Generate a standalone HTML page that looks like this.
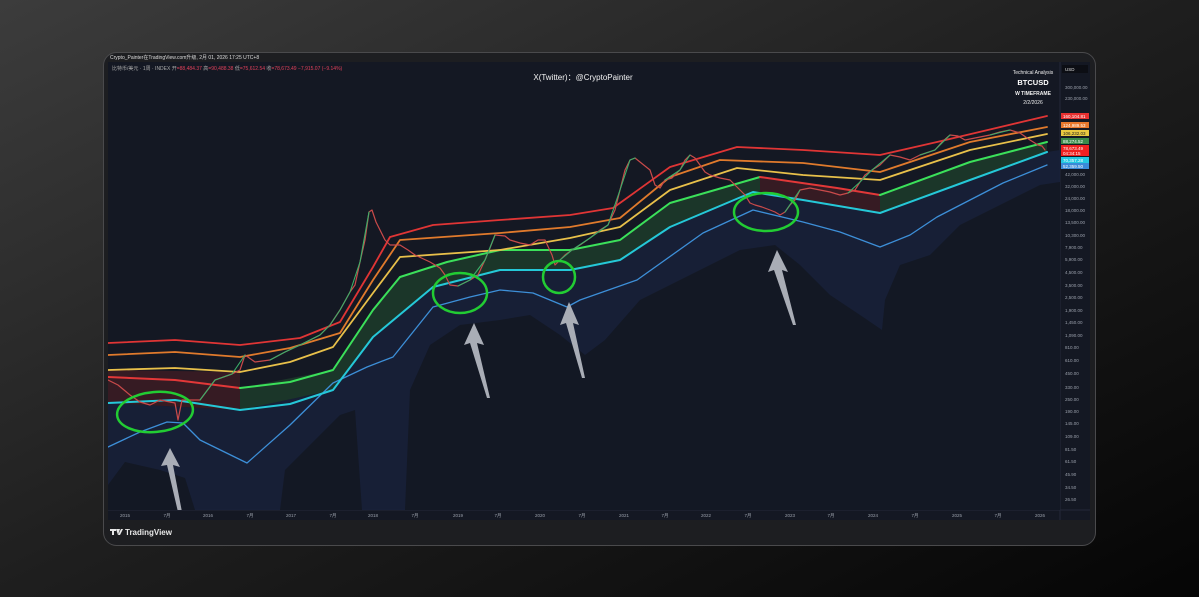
<!DOCTYPE html>
<html><head><meta charset="utf-8"><style>
html,body{margin:0;padding:0;width:1199px;height:597px;overflow:hidden;background:#111;}
svg{display:block}
text{font-family:"Liberation Sans","Noto Sans CJK SC",sans-serif;}
</style></head><body>
<svg width="1199" height="597" viewBox="0 0 1199 597" xmlns="http://www.w3.org/2000/svg">
<defs>
<linearGradient id="bg" x1="0" y1="0" x2="1" y2="1">
<stop offset="0" stop-color="#3c3c3c"/><stop offset="0.5" stop-color="#1e1e1e"/><stop offset="1" stop-color="#050505"/>
</linearGradient>
<clipPath id="cc"><rect x="108" y="62" width="952" height="448"/></clipPath>
</defs>
<rect width="1199" height="597" fill="url(#bg)"/>
<rect x="103.5" y="52.5" width="992" height="493" rx="13" fill="#1d1e21" stroke="#4a4a4c" stroke-width="1"/>
<rect x="108" y="62" width="982" height="458" fill="#141823"/>
<line x1="108" y1="510" x2="1090" y2="510" stroke="#232838"/>
<line x1="1060" y1="62" x2="1060" y2="520" stroke="#232838"/>
<text x="110" y="59" font-size="5" fill="#ddd">Crypto_Painter在TradingView.com升级, 2月 01, 2026 17:25 UTC+8</text>
<text x="112" y="70" font-size="5" fill="#aaa">比特币/美元 · 1周 · INDEX  开<tspan fill="#e0405a">=88,484.37</tspan> 高<tspan fill="#e0405a">=90,488.38</tspan> 低<tspan fill="#e0405a">=75,612.54</tspan> 收<tspan fill="#e0405a">=78,673.49  −7,915.07 (−9.14%)</tspan></text>
<g clip-path="url(#cc)">
<polygon fill="#17213a" opacity="0.85" points="108,403 240,410 333,390 373,337 433,287 500,270 570,270 620,260 670,227 753,192 803,200 880,213 970,180 1047,152 1060,150 1060,510 108,510"/>
<polygon fill="#131824" points="108,510 108,485 125,462 160,470 185,478 195,510"/>
<polygon fill="#131824" points="280,510 285,470 310,445 340,415 355,410 362,510"/>
<polygon fill="#131824" points="405,510 410,390 430,345 460,325 500,320 530,315 560,335 585,355 605,340 640,300 690,275 740,250 775,245 800,265 830,295 860,315 882,330 885,300 900,265 930,255 960,225 1000,205 1040,185 1060,182 1060,510"/>
<polygon fill="#3a1c24" opacity="0.9" points="108,370 240,372 240,410 108,403"/>
<polygon fill="#1c3a2a" opacity="0.9" points="240,388 333,370 373,310 400,277 447,262 500,250 570,250 620,240 670,203 760,177 760,192 753,192 670,227 620,260 570,270 500,270 433,287 373,337 333,390 240,410"/>
<polygon fill="#3a1c24" opacity="0.9" points="760,177 837,188 880,195 880,213 803,200 760,192"/>
<polygon fill="#1c3a2a" opacity="0.9" points="880,195 970,162 1047,142 1047,152 970,180 880,213"/>
<g fill="none" stroke-linejoin="round" stroke-linecap="round">
<polyline stroke="#3d8fd8" stroke-width="1.3" points="108,447 140,432 167,422 183,423 200,440 247,463 290,425 333,383 367,367 393,357 433,307 470,297 500,290 533,293 567,307 580,300 637,280 703,233 753,210 803,222 840,232 880,247 910,235 937,217 1003,183 1047,165"/>
<polyline stroke="#25c8d8" stroke-width="2" points="108,403 175,400 240,410 290,404 333,390 373,337 433,287 500,270 570,270 620,260 670,227 753,192 803,200 880,213 970,180 1047,152"/>
<polyline stroke="#e23838" stroke-width="2" points="108,377 175,380 240,388"/>
<polyline stroke="#3be05a" stroke-width="2" points="240,388 290,382 333,370 373,310 400,277 447,262 500,250 570,250 620,240 670,203 760,177"/>
<polyline stroke="#e23838" stroke-width="2" points="760,177 837,188 880,195"/>
<polyline stroke="#3be05a" stroke-width="2" points="880,195 970,162 1047,142"/>
<polyline stroke="#e8c04a" stroke-width="1.8" points="108,370 175,368 240,372 290,362 333,347 373,293 400,257 500,250 570,238 620,227 670,190 737,168 803,175 880,180 970,150 1047,134"/>
<polyline stroke="#e07a2c" stroke-width="1.8" points="108,355 175,352 240,357 290,348 340,333 373,280 400,240 500,233 570,227 620,218 670,177 720,160 803,163 880,172 970,142 1047,127"/>
<polyline stroke="#e03535" stroke-width="1.8" points="108,343 175,340 240,345 300,338 340,322 373,267 390,237 433,225 500,220 570,215 613,208 670,167 737,147 803,150 880,155 937,142 1047,116"/>
<polyline stroke="#c94a4a" stroke-width="1.2" points="108,380 118,385 130,395 140,402 150,405 160,400 175,403 178,420 182,400 200,400 215,380 232,374 240,370 245,355 255,362 270,360 285,352 300,345 320,335 330,325 340,310 350,292 355,285 360,262 365,240 369,212 372,210 376,222 380,230 385,240 390,245 400,245 408,250 415,255 430,262 440,268 445,275 450,285 458,286 470,280 478,275 485,260 490,248 495,235 505,236 510,240 520,243 530,245 538,240 545,240 552,255 555,265 560,260 565,255 572,250 580,245 590,238 600,230 608,225 615,210 620,190 625,170 630,160 635,158 640,162 650,170 655,185 660,188 665,180 672,178 680,170 685,160 690,155 695,158 700,165 705,172 710,175 720,178 730,180 738,188 745,195 750,203 755,205 762,207 770,210 775,212 780,215 785,212 790,205 795,200 800,190 810,188 820,190 830,192 840,195 848,193 855,190 860,182 865,175 872,170 880,165 885,160 890,155 900,157 910,160 920,155 935,150 942,142 950,135 958,136 965,140 975,138 990,135 1000,132 1010,130 1020,133 1030,140 1038,145 1042,146 1045,150"/>
<g stroke="#3bb06a" stroke-width="1.1">
<polyline points="200,400 215,380 232,374 245,355"/><polyline points="270,360 285,352 300,345 320,335 330,325 340,310 350,292 360,262 369,212"/>
<polyline points="458,286 470,280 485,260 495,235"/><polyline points="560,260 572,250 590,238 608,225 620,190 630,160 635,158"/>
<polyline points="665,180 680,170 690,155"/><polyline points="785,212 800,190"/><polyline points="848,193 860,182 872,170 890,155"/><polyline points="920,155 935,150 950,135"/><polyline points="990,135 1010,130"/>
</g>
<ellipse cx="155" cy="412" rx="38" ry="20" stroke="#22cc33" stroke-width="2.5" transform="rotate(-5 155 412)"/>
<ellipse cx="460" cy="293" rx="27" ry="20" stroke="#22cc33" stroke-width="2.5"/>
<ellipse cx="559" cy="277" rx="16" ry="16" stroke="#22cc33" stroke-width="2.5"/>
<ellipse cx="766" cy="212" rx="32" ry="19" stroke="#22cc33" stroke-width="2.5"/>
</g>
<g fill="#a9adb6">
<polygon points="170,448 161,466 167,465 178,512 182,512 173,465 180,467"/>
<polygon points="474,323 464,345 470,343 487,398 490,398 477,343 484,345"/>
<polygon points="569,302 560,325 566,323 582,378 585,378 573,323 579,325"/>
<polygon points="777,250 768,272 774,270 793,325 796,325 782,270 788,272"/>
</g>
</g>
<text x="583" y="80" font-size="8" fill="#f2f2f2" text-anchor="middle">X(Twitter)：@CryptoPainter</text>
<text x="1033" y="74" font-size="5" fill="#eee" text-anchor="middle">Technical Analysis</text>
<text x="1033" y="85" font-size="7.5" fill="#fff" text-anchor="middle" font-weight="bold">BTCUSD</text>
<text x="1033" y="95" font-size="5" fill="#eee" text-anchor="middle" font-weight="bold">W TIMEFRAME</text>
<text x="1033" y="104" font-size="5" fill="#eee" text-anchor="middle">2/2/2026</text>
<rect x="1062" y="65" width="26" height="8" fill="#0c0e14"/>
<text x="1065" y="71" font-size="4.5" fill="#ddd">USD</text>
<g font-size="4.5" fill="#9aa0ab">
<text x="1065" y="89">300,000.00</text><text x="1065" y="100">230,000.00</text>
<text x="1065" y="176">42,000.00</text><text x="1065" y="188">32,000.00</text><text x="1065" y="200">24,000.00</text><text x="1065" y="212">18,000.00</text><text x="1065" y="224">13,500.00</text><text x="1065" y="237">10,300.00</text><text x="1065" y="249">7,900.00</text><text x="1065" y="261">5,900.00</text><text x="1065" y="274">4,500.00</text><text x="1065" y="287">3,500.00</text><text x="1065" y="299">2,500.00</text><text x="1065" y="312">1,900.00</text><text x="1065" y="324">1,450.00</text><text x="1065" y="337">1,090.00</text><text x="1065" y="349">810.00</text><text x="1065" y="362">610.00</text><text x="1065" y="375">450.00</text><text x="1065" y="389">330.00</text><text x="1065" y="401">250.00</text><text x="1065" y="413">190.00</text><text x="1065" y="425">145.00</text><text x="1065" y="438">109.00</text><text x="1065" y="451">81.50</text><text x="1065" y="463">61.50</text><text x="1065" y="476">45.90</text><text x="1065" y="489">34.50</text><text x="1065" y="501">26.50</text>
</g>
<g font-size="4.5" fill="#fff">
<rect x="1061" y="113" width="28" height="6" fill="#e83030"/><text x="1063" y="118">160,104.81</text>
<rect x="1061" y="122" width="28" height="6" fill="#e8772c"/><text x="1063" y="127">124,989.53</text>
<rect x="1061" y="130" width="28" height="6" fill="#e8c840"/><text x="1063" y="135" fill="#222">106,232.03</text>
<rect x="1061" y="138" width="28" height="6" fill="#3a8a4a"/><text x="1063" y="143">88,274.52</text>
<rect x="1061" y="145" width="28" height="11" fill="#f02020"/><text x="1063" y="150">78,673.49</text><text x="1063" y="155">04:34:15</text>
<rect x="1061" y="157" width="28" height="6" fill="#22c8e0"/><text x="1063" y="162">70,357.28</text>
<rect x="1061" y="163" width="28" height="6" fill="#3a8ad8"/><text x="1063" y="168">52,359.50</text>
</g>
<g font-size="4.5" fill="#9aa0ab" text-anchor="middle">
<text x="125" y="517">2015</text><text x="167" y="517">7月</text><text x="208" y="517">2016</text><text x="250" y="517">7月</text><text x="291" y="517">2017</text><text x="333" y="517">7月</text><text x="373" y="517">2018</text><text x="415" y="517">7月</text><text x="458" y="517">2019</text><text x="498" y="517">7月</text><text x="540" y="517">2020</text><text x="582" y="517">7月</text><text x="624" y="517">2021</text><text x="665" y="517">7月</text><text x="706" y="517">2022</text><text x="748" y="517">7月</text><text x="790" y="517">2023</text><text x="831" y="517">7月</text><text x="873" y="517">2024</text><text x="915" y="517">7月</text><text x="957" y="517">2025</text><text x="998" y="517">7月</text><text x="1040" y="517">2026</text>
</g>
<rect x="108" y="520" width="982" height="20" fill="#1d1e21"/>
<g fill="#e8e8e8">
<rect x="110" y="529" width="6" height="2"/><rect x="112" y="529" width="2" height="6"/>
<polygon points="116,529 120,529 118,535"/><polygon points="118,535 121,529 123,529 120,535"/>
</g>
<text x="125" y="535" font-size="8" fill="#e8e8e8" font-weight="bold">TradingView</text>
</svg>
</body></html>
